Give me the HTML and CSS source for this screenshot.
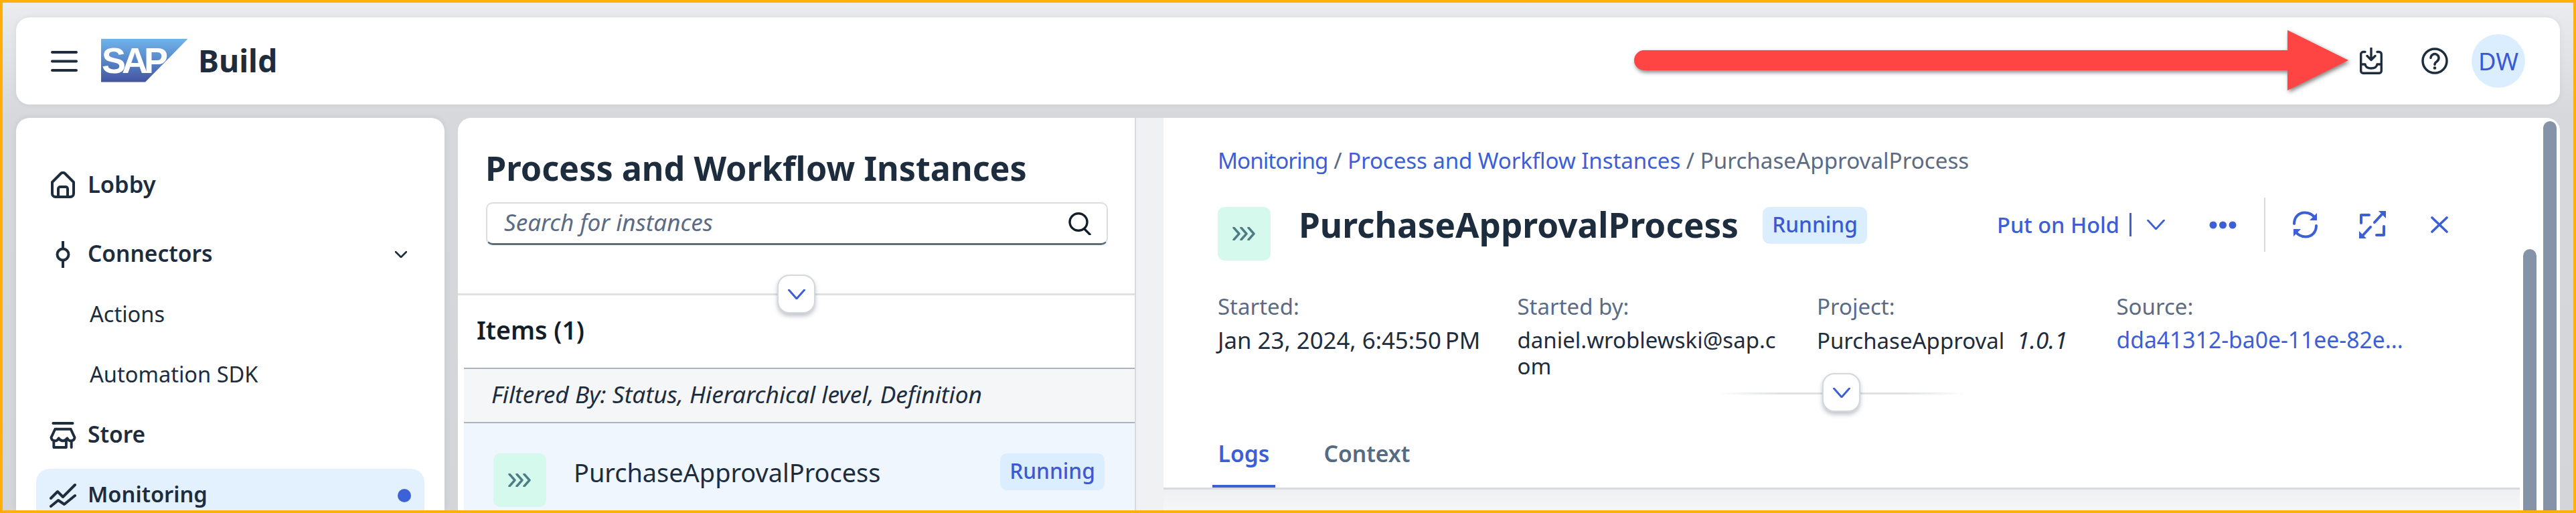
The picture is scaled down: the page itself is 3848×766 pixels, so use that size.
FILE: index.html
```html
<!doctype html>
<html lang="en">
<head>
<meta charset="utf-8">
<title>SAP Build - Process and Workflow Instances</title>
<link rel="stylesheet" href="styles.css">
</head>
<body>
<div class="frame">
  <header class="topbar">
    <svg class="ic-menu" viewBox="0 0 40 31"><path d="M2 2H38M2 15.500H38M2 29H38"/></svg>
    <div class="logo"><span>SAP</span></div>
    <div class="brand">Build</div>
    <div class="top-actions">
      <svg class="ic-tray" viewBox="0 0 34 40"><path d="M8 6.500H5A3.400 3.400 0 0 0 1.700 10V35A3.400 3.400 0 0 0 5 38.300H29A3.400 3.400 0 0 0 32.300 35V10A3.400 3.400 0 0 0 29 6.500H26M2 25H8Q9 31 17 31Q25 31 26 25H32M17 1V18M11 12.500L17 18.500L23 12.500"/></svg>
      <svg class="ic-help" viewBox="0 0 40 40"><circle cx="20" cy="20" r="18"/><path d="M14 15.500A6 6 0 1 1 23.500 20.500C21 22 20 23 20 25.500"/><circle class="solid" cx="20" cy="30.500" r="2.300"/></svg>
      <div class="avatar">DW</div>
    </div>
  </header>

  <div class="workspace">
    <nav class="sidenav">
      <a class="nav-item nav-lobby"><svg class="ic-nav" viewBox="0 0 40 40"><path d="M4 16L17 3Q20 0.500 23 3L36 16V33A5 5 0 0 1 31 38H9A5 5 0 0 1 4 33ZM13 38V26A3 3 0 0 1 16 23H24A3 3 0 0 1 27 26V38"/></svg><span class="nav-text">Lobby</span></a>
      <a class="nav-item"><svg class="ic-nav" viewBox="0 0 40 40"><path d="M20 0V10.500M20 29V40"/><circle cx="20" cy="20" r="8.500"/></svg><span class="nav-text">Connectors</span><svg class="ic-chev" viewBox="0 0 18 10"><path d="M1 1L9 9L17 1"/></svg></a>
      <a class="nav-item nav-sub"><span class="nav-text">Actions</span></a>
      <a class="nav-item nav-sub"><span class="nav-text">Automation SDK</span></a>
      <a class="nav-item"><svg class="ic-nav" viewBox="0 0 40 41"><path d="M5 2H35M8 11H32L38 24Q37 29 32 29Q28.500 29 26.500 25Q24 29 20 29Q16 29 13.500 25Q11.500 29 8 29Q3 29 2 24ZM6 29V39H25V29M33 29V39"/></svg><span class="nav-text">Store</span></a>
      <a class="nav-item nav-active"><svg class="ic-nav" viewBox="0 0 40 36"><path d="M2 22L12 12L20 20L38 2M2 34L13 25L22 31L38 18"/></svg><span class="nav-text">Monitoring</span><i class="dot"></i></a>
    </nav>

    <div class="panels">
      <section class="master">
        <div class="master-head">
          <h1>Process and Workflow Instances</h1>
          <div class="search"><span class="search-text">Search for instances</span><svg class="ic-search" viewBox="0 0 35 34"><ellipse cx="15" cy="14.500" rx="13" ry="12.800"/><path d="M24 25L32 33"/></svg></div>
          <button class="collapse collapse-master"><svg viewBox="0 0 26 15"><path d="M1.500 1L13 14L24.500 1"/></svg></button>
        </div>
        <div class="list">
          <div class="list-title">Items (1)</div>
          <div class="list-filter">Filtered By: Status, Hierarchical level, Definition</div>
          <div class="list-row">
            <div class="proc-icon"><svg viewBox="0 0 36 20"><path d="M2 1L10 10L2 19M13 1L21 10L13 19M24 1L32 10L24 19"/></svg></div>
            <div class="row-name">PurchaseApprovalProcess</div>
            <div class="badge badge-row">Running</div>
          </div>
        </div>
      </section>

      <section class="detail">
        <div class="detail-main">
          <div class="detail-head">
            <div class="crumbs"><a class="crumb-first">Monitoring</a> / <a class="crumb-second">Process and Workflow Instances</a> / PurchaseApprovalProcess</div>
            <div class="title-row">
              <div class="proc-icon"><svg viewBox="0 0 36 20"><path d="M2 1L10 10L2 19M13 1L21 10L13 19M24 1L32 10L24 19"/></svg></div>
              <h2>PurchaseApprovalProcess</h2>
              <div class="badge">Running</div>
              <div class="actions">
                <span class="hold">Put on Hold</span><i class="hold-bar"></i>
                <svg class="ic-hold-chev" viewBox="0 0 27 15"><path d="M1.500 1L13.500 14L25.500 1"/></svg>
                <svg class="ic-dots" viewBox="0 0 41 12"><circle cx="6" cy="6" r="5.500"/><circle cx="20.500" cy="6" r="5.500"/><circle cx="35" cy="6" r="5.500"/></svg>
                <i class="action-sep"></i>
                <svg class="ic-refresh" viewBox="0 0 41 41"><path class="line" d="M4 19C4 9 11 2.500 20 2.500C26 2.500 31 5 35 10M37 22C37 32 30 38.500 21 38.500C15 38.500 10 36 6 31"/><path class="solid" d="M38 3V14H27ZM3 38V27H14Z"/></svg>
                <svg class="ic-expand" viewBox="0 0 40 41"><path class="line" d="M3 18V6H15M37 23V36H26M23 17L35 4M17 24L5 37"/><path class="solid" d="M29 0H40V11ZM11 41H0V30Z"/></svg>
                <svg class="ic-close" viewBox="0 0 26 25"><path d="M2 2L24 23M24 2L2 23"/></svg>
              </div>
            </div>
            <div class="meta">
              <div><div class="meta-label">Started:</div><div class="meta-value meta-date">Jan 23, 2024, 6:45:50&#8201;PM</div></div>
              <div><div class="meta-label">Started by:</div><div class="meta-value">daniel.wroblewski@sap.com</div></div>
              <div><div class="meta-label">Project:</div><div class="meta-value">PurchaseApproval <em>1.0.1</em></div></div>
              <div><div class="meta-label">Source:</div><div class="meta-value meta-link">dda41312-ba0e-11ee-82e...</div></div>
            </div>
            <div class="fade-line"><button class="collapse collapse-detail"><svg viewBox="0 0 26 15"><path d="M1.500 1L13 14L24.500 1"/></svg></button></div>
          </div>
          <div class="tabs"><div class="tab tab-on">Logs</div><div class="tab">Context</div></div>
          <div class="tab-body"></div>
        </div>
        <i class="thumb thumb-inner"></i>
        <i class="thumb thumb-outer"></i>
      </section>
    </div>
  </div>

  <svg class="callout" viewBox="0 0 1067 90"><path d="M15 30H976V0L1067 45L976 90V60H15A15 15 0 0 1 15 30Z"/></svg>
</div>
</body>
</html>
```
FILE: styles.css
```css
* { box-sizing: border-box; }
html, body { margin: 0; padding: 0; }
body { font-family: "Noto Sans", "Open Sans", sans-serif; color: #1d2d3e; }
svg { display: block; flex: none; fill: none; stroke-linecap: round; stroke-linejoin: round; }
h1, h2 { margin: 0; }

.frame {
  position: relative;
  height: 766px;
  overflow: hidden;
  border: 4px solid #ffae0a;
  padding: 22px 20px 0;
  background: linear-gradient(#eaecee 0, #d6d8dc 170px, #d3d5d9 100%);
  display: flex;
  flex-direction: column;
}

/* Top bar */
.topbar {
  flex: none;
  height: 130px;
  background: #fff;
  border-radius: 20px;
  display: flex;
  align-items: center;
  padding: 0 52px;
  box-shadow: 0 0 8px rgba(60, 70, 90, .08);
}
.ic-menu { width: 40px; height: 31px; stroke: #1d2d3e; stroke-width: 4; }
.logo {
  width: 130px;
  height: 65px;
  margin-left: 35px;
  margin-top: -2px;
  background: linear-gradient(#70b4ea, #5a8bcd 45%, #4353a0);
  clip-path: polygon(0 0, 100% 0, 50.800% 100%, 0 100%);
  overflow: hidden;
}
.logo span {
  display: block;
  font: bold 54px/65px "Liberation Sans", sans-serif;
  letter-spacing: -6px;
  color: #fff;
  padding-left: 1px;
}
.brand { margin-left: 15px; font-size: 46.500px; font-weight: 700; line-height: 60px; margin-top: -2px; }
.top-actions { margin-left: auto; display: flex; align-items: center; }
.ic-tray { width: 34px; height: 40px; stroke: #1d2d3e; stroke-width: 3.400; }
.ic-help { width: 40px; height: 40px; margin-left: 58px; stroke: #1d2d3e; stroke-width: 3.500; }
.ic-help .solid { fill: #1d2d3e; stroke: none; }
.avatar {
  width: 80px;
  height: 80px;
  margin-left: 35px;
  border-radius: 50%;
  background: #dbeeff;
  color: #3c59d2;
  font-size: 36.400px;
  line-height: 80px;
  text-align: center;
}

/* Workspace */
.workspace { flex: 1; min-height: 0; display: flex; gap: 20px; margin-top: 20px; }
.sidenav {
  flex: none;
  width: 640px;
  padding: 60px 30px 0;
  background: #fff;
  border-radius: 20px 20px 0 0;
  display: flex;
  flex-direction: column;
  gap: 10px;
  box-shadow: 0 0 8px rgba(60, 70, 90, .1);
}
.nav-item {
  flex: none;
  height: 80px;
  padding: 0 20px;
  display: flex;
  align-items: center;
  font-size: 33.500px;
  font-weight: 600;
  border-radius: 20px;
}
.nav-text { margin-bottom: 4px; }
.nav-lobby { margin-bottom: 14px; font-size: 34.500px; }
.nav-sub { padding-left: 80px; font-weight: 400; font-size: 32.600px; }
.nav-active { background: #e3f1fe; font-size: 32.700px; }
.nav-active .nav-text { margin-bottom: 6px; }
.ic-nav { width: 40px; height: 40px; margin-right: 17px; stroke: #1d2d3e; stroke-width: 4; }
.ic-chev { width: 18px; height: 10px; margin: 0 6px 0 auto; stroke: #1d2d3e; stroke-width: 2.600; }
.dot { margin-left: auto; width: 20px; height: 20px; border-radius: 50%; background: #3d62d8; }

/* Panels */
.panels { flex: 1; min-width: 0; display: flex; background: #eff1f3; border-radius: 20px 20px 0 0; }
.master { position: relative; flex: none; width: 1013px; display: flex; flex-direction: column; background: #fff; border-right: 2px solid #d9dadd; border-radius: 20px 0 0 0; }
.master-head { position: relative; flex: none; height: 265px; padding: 45px 0 0 41px; border-bottom: 3px solid #dfe1e4; }
h1 { font-size: 50.300px; font-weight: 700; line-height: 60px; }
.search {
  width: 929px;
  height: 64px;
  margin: 21px 0 0 1px;
  padding: 0 22px 0 25px;
  display: flex;
  align-items: center;
  justify-content: space-between;
  border: 2px solid #dadde1;
  border-bottom: 3px solid #5b6b85;
  border-radius: 10px;
  font-size: 35px;
  font-style: italic;
  color: #5b6b85;
}
.search-text { margin-bottom: 4px; }
.ic-search { width: 35px; height: 34px; stroke: #131e29; stroke-width: 3.400; }

.collapse {
  position: absolute;
  width: 57px;
  height: 58px;
  padding: 0;
  display: flex;
  align-items: center;
  justify-content: center;
  background: #fff;
  border: 2px solid #d4d7db;
  border-radius: 18px;
  box-shadow: 0 4px 6px rgba(50, 60, 80, .3);
}
.collapse svg { width: 26px; height: 15px; stroke: #3c5fd8; stroke-width: 3; }
.collapse-master { left: 477px; top: 234px; }
.collapse-detail { left: 155px; top: -29px; }

.list { flex: 1; min-height: 0; margin-left: 9px; display: flex; flex-direction: column; background: #fff; border-radius: 20px 20px 0 0; }
.list-title { flex: none; height: 110px; padding: 0 0 5px 19px; display: flex; align-items: center; font-size: 37.500px; font-weight: 600; border-bottom: 2px solid #a9b4be; color: #131e29; }
.list-filter { flex: none; height: 81px; padding: 0 0 5px 41px; display: flex; align-items: center; font-size: 35.300px; font-style: italic; background: #f5f6f7; border-bottom: 2px solid #a9b4be; color: #1d2d3e; }
.list-row { flex: 1; padding: 45px 45px 0 44px; display: flex; align-items: flex-start; background: #eff6fd; }
.proc-icon { flex: none; width: 79px; height: 80px; display: flex; align-items: center; justify-content: center; background: #d5f9ec; border-radius: 10px; }
.proc-icon svg { width: 36px; height: 20px; stroke: #4d7c85; stroke-width: 3.400; }
.row-name { margin: 0 0 0 41px; font-size: 37.900px; line-height: 56px; }
.badge { flex: none; width: 156px; height: 55px; padding-bottom: 4px; display: flex; align-items: center; justify-content: center; background: #dbeeff; border-radius: 10px; color: #3c59d2; font-size: 31.700px; font-weight: 500; }
.badge-row { margin-left: auto; }

/* Detail */
.detail { position: relative; flex: none; width: 2086px; margin-left: 41px; background: #fff; border-radius: 0 20px 0 0; overflow: hidden; }
.detail-main { width: 2026px; height: 100%; display: flex; flex-direction: column; }
.detail-head { flex: none; padding: 42px 0 0 81px; }
.crumbs { font-size: 33.200px; line-height: 44px; color: #5b6b85; }
.crumbs a { color: #3c5fd8; }
.crumbs .crumb-first { letter-spacing: -1px; }
.crumbs .crumb-second { letter-spacing: -.15px; }
.title-row { height: 80px; margin-top: 47px; display: flex; align-items: flex-start; }
.title-row h2 { margin-left: 42px; font-size: 51.300px; font-weight: 700; line-height: 52px; }
.title-row .badge { margin-left: 36px; }
.actions { margin: -14px 107px 0 auto; height: 81px; display: flex; align-items: center; color: #3c5fd8; }
.hold { font-size: 32.500px; font-weight: 500; }
.hold-bar { width: 3px; height: 35px; margin-left: 15px; background: #3c5fd8; }
.ic-hold-chev { width: 27px; height: 15px; margin-left: 23px; stroke: #3c5fd8; stroke-width: 2.800; }
.ic-dots { width: 41px; height: 12px; margin-left: 66px; fill: #3c5fd8; }
.action-sep { width: 2px; height: 81px; margin-left: 41px; background: #d9dadd; }
.ic-refresh { width: 41px; height: 41px; margin-left: 39px; }
.ic-expand { width: 40px; height: 41px; margin-left: 60px; }
.ic-refresh .line, .ic-expand .line { stroke: #3c5fd8; stroke-width: 4; }
.ic-refresh .solid, .ic-expand .solid { fill: #3c5fd8; }
.ic-close { width: 26px; height: 25px; margin-left: 67px; stroke: #3c5fd8; stroke-width: 3.600; }

.meta { height: 134px; margin-top: 47px; display: grid; grid-template-columns: repeat(4, 447.500px); }
.meta > div { width: 400px; }
.meta-label { font-size: 33px; line-height: 44px; color: #5b6b85; }
.meta-value { margin-top: 8px; font-size: 33px; line-height: 39px; overflow-wrap: anywhere; }
.meta-date { font-size: 34.800px; }
.meta-value em { margin-left: 10px; font-size: 35px; }
.meta-link { color: #3c5fd8; white-space: nowrap; font-size: 33.700px; }

.fade-line { position: relative; width: 369px; height: 3px; margin: 16px 0 0 748px; background: linear-gradient(90deg, rgba(217,219,222,0), #dfe1e4 25%, #dfe1e4 75%, rgba(217,219,222,0)); }

.tabs { flex: none; margin-top: 66px; padding-left: 73px; display: flex; gap: 64px; border-bottom: 3px solid #d9dadd; }
.tab { padding: 0 8.500px 29px; font-size: 33.700px; font-weight: 600; line-height: 44px; color: #556b82; }
.tab-on { color: #3c5fd8; padding-bottom: 25px; border-bottom: 4px solid #3c5fd8; border-radius: 4px 4px 0 0; }
.tab-body { flex: 1; background: linear-gradient(#eef0f2, #f5f6f7); }

.thumb { position: absolute; bottom: 0; width: 20px; background: #8593a8; border-radius: 10px 10px 0 0; }
.thumb-inner { left: 2031px; top: 196px; }
.thumb-outer { left: 2061px; top: 5px; }

/* Annotation arrow */
.callout { position: absolute; left: 2437px; top: 41px; width: 1067px; height: 90px; overflow: visible; fill: #ff4444; filter: drop-shadow(2px 3px 3px rgba(0, 0, 0, .5)); }
```
